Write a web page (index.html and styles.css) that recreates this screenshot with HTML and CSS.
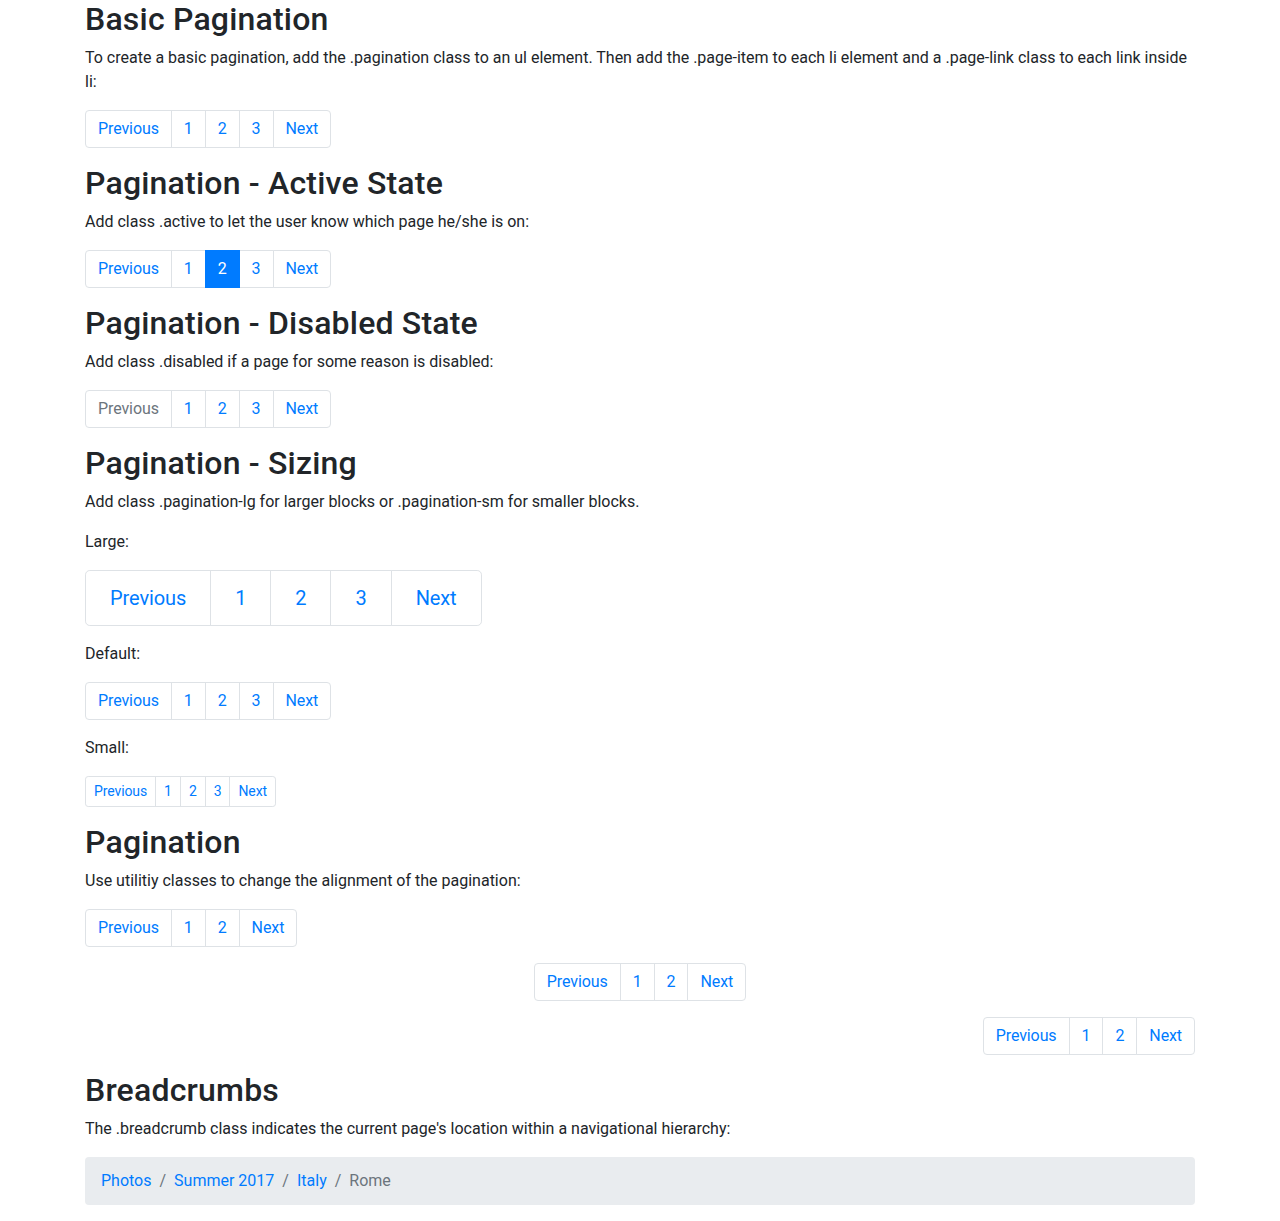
FILE: index.html
```html
<!DOCTYPE html>
<html lang="en">
<head>
<meta charset="utf-8">
<title>Pagination</title>
<link rel="stylesheet" href="styles.css">
</head>
<body>
<div class="container">
  <h2>Basic Pagination</h2>
  <p>To create a basic pagination, add the .pagination class to an ul element. Then add the .page-item to each li element and a .page-link class to each link inside li:</p>
  <ul class="pagination">
    <li class="page-item"><a class="page-link" href="#">Previous</a></li>
    <li class="page-item"><a class="page-link" href="#">1</a></li>
    <li class="page-item"><a class="page-link" href="#">2</a></li>
    <li class="page-item"><a class="page-link" href="#">3</a></li>
    <li class="page-item"><a class="page-link" href="#">Next</a></li>
  </ul>

  <h2>Pagination - Active State</h2>
  <p>Add class .active to let the user know which page he/she is on:</p>
  <ul class="pagination">
    <li class="page-item"><a class="page-link" href="#">Previous</a></li>
    <li class="page-item"><a class="page-link" href="#">1</a></li>
    <li class="page-item active"><a class="page-link" href="#">2</a></li>
    <li class="page-item"><a class="page-link" href="#">3</a></li>
    <li class="page-item"><a class="page-link" href="#">Next</a></li>
  </ul>

  <h2>Pagination - Disabled State</h2>
  <p>Add class .disabled if a page for some reason is disabled:</p>
  <ul class="pagination">
    <li class="page-item disabled"><a class="page-link" href="#">Previous</a></li>
    <li class="page-item"><a class="page-link" href="#">1</a></li>
    <li class="page-item"><a class="page-link" href="#">2</a></li>
    <li class="page-item"><a class="page-link" href="#">3</a></li>
    <li class="page-item"><a class="page-link" href="#">Next</a></li>
  </ul>

  <h2>Pagination - Sizing</h2>
  <p>Add class .pagination-lg for larger blocks or .pagination-sm for smaller blocks.</p>
  <p>Large:</p>
  <ul class="pagination pagination-lg">
    <li class="page-item"><a class="page-link" href="#">Previous</a></li>
    <li class="page-item"><a class="page-link" href="#">1</a></li>
    <li class="page-item"><a class="page-link" href="#">2</a></li>
    <li class="page-item"><a class="page-link" href="#">3</a></li>
    <li class="page-item"><a class="page-link" href="#">Next</a></li>
  </ul>
  <p>Default:</p>
  <ul class="pagination">
    <li class="page-item"><a class="page-link" href="#">Previous</a></li>
    <li class="page-item"><a class="page-link" href="#">1</a></li>
    <li class="page-item"><a class="page-link" href="#">2</a></li>
    <li class="page-item"><a class="page-link" href="#">3</a></li>
    <li class="page-item"><a class="page-link" href="#">Next</a></li>
  </ul>
  <p>Small:</p>
  <ul class="pagination pagination-sm">
    <li class="page-item"><a class="page-link" href="#">Previous</a></li>
    <li class="page-item"><a class="page-link" href="#">1</a></li>
    <li class="page-item"><a class="page-link" href="#">2</a></li>
    <li class="page-item"><a class="page-link" href="#">3</a></li>
    <li class="page-item"><a class="page-link" href="#">Next</a></li>
  </ul>

  <h2>Pagination</h2>
  <p>Use utilitiy classes to change the alignment of the pagination:</p>
  <ul class="pagination">
    <li class="page-item"><a class="page-link" href="#">Previous</a></li>
    <li class="page-item"><a class="page-link" href="#">1</a></li>
    <li class="page-item"><a class="page-link" href="#">2</a></li>
    <li class="page-item"><a class="page-link" href="#">Next</a></li>
  </ul>
  <ul class="pagination justify-content-center">
    <li class="page-item"><a class="page-link" href="#">Previous</a></li>
    <li class="page-item"><a class="page-link" href="#">1</a></li>
    <li class="page-item"><a class="page-link" href="#">2</a></li>
    <li class="page-item"><a class="page-link" href="#">Next</a></li>
  </ul>
  <ul class="pagination justify-content-end">
    <li class="page-item"><a class="page-link" href="#">Previous</a></li>
    <li class="page-item"><a class="page-link" href="#">1</a></li>
    <li class="page-item"><a class="page-link" href="#">2</a></li>
    <li class="page-item"><a class="page-link" href="#">Next</a></li>
  </ul>

  <h2>Breadcrumbs</h2>
  <p>The .breadcrumb class indicates the current page's location within a navigational hierarchy:</p>
  <ul class="breadcrumb">
    <li class="breadcrumb-item"><a href="#">Photos</a></li>
    <li class="breadcrumb-item"><a href="#">Summer 2017</a></li>
    <li class="breadcrumb-item"><a href="#">Italy</a></li>
    <li class="breadcrumb-item active">Rome</li>
  </ul>
</div>
</body>
</html>
```
FILE: styles.css
```css
* {
  box-sizing: border-box;
}

body {
  margin: 0;
  font-family: Roboto, "Liberation Sans", sans-serif;
  font-size: 16px;
  font-weight: 400;
  line-height: 1.5;
  color: #212529;
  background: #fff;
}

.container {
  width: 1140px;
  max-width: 100%;
  margin: 0 auto;
  padding: 0 15px;
}

h2 {
  margin: 0 0 8px;
  font-size: 32px;
  font-weight: 500;
  line-height: 38px;
  letter-spacing: 0.2px;
}

p {
  margin: 0 0 16px;
}

a {
  color: #007bff;
  text-decoration: none;
}

/* Pagination */
.pagination {
  display: flex;
  margin: 0 0 16px;
  padding-left: 0;
  list-style: none;
  border-radius: 4px;
}

.justify-content-center {
  justify-content: center;
}

.justify-content-end {
  justify-content: flex-end;
}

.page-link {
  position: relative;
  display: block;
  padding: 8px 12px;
  margin-left: -1px;
  line-height: 1.25;
  letter-spacing: -0.1px;
  color: #007bff;
  background: #fff;
  border: 1px solid #dee2e6;
}

.page-item:first-child .page-link {
  margin-left: 0;
  border-top-left-radius: 4px;
  border-bottom-left-radius: 4px;
}

.page-item:last-child .page-link {
  border-top-right-radius: 4px;
  border-bottom-right-radius: 4px;
}

.page-item.active .page-link {
  z-index: 1;
  color: #fff;
  background: #007bff;
  border-color: #007bff;
}

.page-item.disabled .page-link {
  color: #6c757d;
  background: #fff;
  border-color: #dee2e6;
}

.pagination-lg .page-link {
  padding: 12px 24px;
  font-size: 20px;
  line-height: 1.5;
}

.pagination-lg .page-item:first-child .page-link {
  border-top-left-radius: 4.8px;
  border-bottom-left-radius: 4.8px;
}

.pagination-lg .page-item:last-child .page-link {
  border-top-right-radius: 4.8px;
  border-bottom-right-radius: 4.8px;
}

.pagination-sm .page-link {
  padding: 4px 8px;
  font-size: 14px;
  line-height: 1.5;
}

.pagination-sm .page-item:first-child .page-link {
  border-top-left-radius: 3.2px;
  border-bottom-left-radius: 3.2px;
}

.pagination-sm .page-item:last-child .page-link {
  border-top-right-radius: 3.2px;
  border-bottom-right-radius: 3.2px;
}

/* Breadcrumb */
.breadcrumb {
  display: flex;
  flex-wrap: wrap;
  margin: 0 0 16px;
  padding: 12px 16px;
  list-style: none;
  background: #e9ecef;
  border-radius: 4px;
}

.breadcrumb-item + .breadcrumb-item {
  padding-left: 8px;
}

.breadcrumb-item + .breadcrumb-item::before {
  display: inline-block;
  padding-right: 8px;
  color: #6c757d;
  content: "/";
}

.breadcrumb-item.active {
  color: #6c757d;
}
```
